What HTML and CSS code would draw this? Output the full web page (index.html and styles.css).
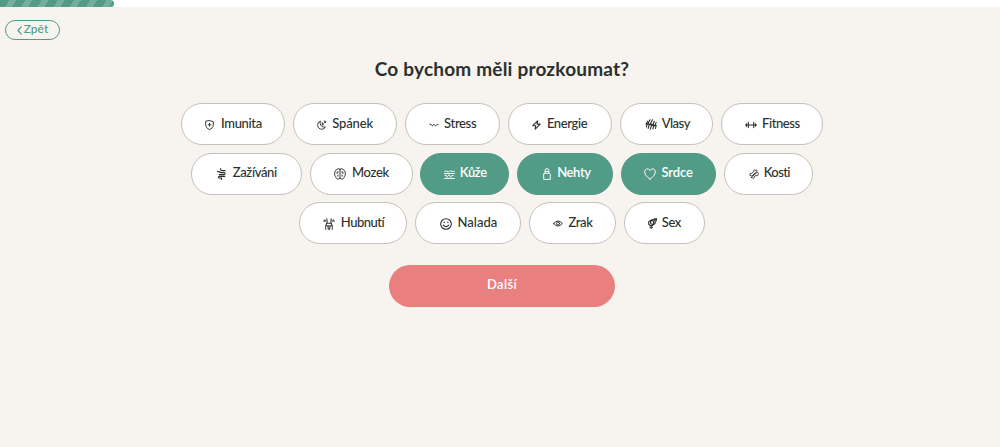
FILE: index.html
```html
<!DOCTYPE html>
<html lang="cs">
<head>
  <meta charset="UTF-8">
  <meta name="viewport" content="width=device-width, initial-scale=1">
  <title>Co bychom měli prozkoumat?</title>
  <link rel="stylesheet" href="styles.css">
</head>

<body>

  <div class="progress">
    <div class="progress-bar"></div>
  </div>

  <button class="back-btn">
    <svg width="5" height="9" viewBox="0 0 5 9"><path d="M4.2 .8L1 4.5L4.2 8.2"/></svg>
    <span>Zpět</span>
  </button>

  <main class="quiz">
    <h1>Co bychom měli prozkoumat?</h1>

    <div class="options">
      <div class="options-row">
        <button class="option imunita">
          <svg width="9" height="10" viewBox="0 0 9 10"><path d="M4.5 .6L8.3 1.6V4.8C8.3 7.1 6.6 8.8 4.5 9.5C2.4 8.8 .7 7.1 .7 4.8V1.6ZM4.5 3.4V6.2M3.1 4.8H5.9"/></svg>
          <span>Imunita</span>
        </button>
        <button class="option spanek">
          <svg width="9" height="10" viewBox="0 0 9 10"><path d="M3.1 1.4C1.2 2.2 .5 3.8 .7 5.6C1 7.9 2.7 9.2 4.8 9.2C6.5 9.2 7.8 8.3 8.4 6.9C5.5 7.8 2.4 5.5 3.1 1.4ZM4.9 3H6.3L5 4.9H6.5M7.2 1.2H8.5L7.4 2.6H8.6"/></svg>
          <span>Spánek</span>
        </button>
        <button class="option stress">
          <svg width="10" height="4" viewBox="0 0 10 4"><path d="M.5 1.8C1.2 .8 2 .8 2.5 1.8C3 3.2 3.8 3.2 4.2 2C4.7 1 5.3 1 5.8 2C6.3 3.2 7 3.2 7.5 2C8 1.1 8.8 1.1 9.5 1.8"/></svg>
          <span>Stress</span>
        </button>
        <button class="option energie">
          <svg class="bold" width="9" height="10" viewBox="0 0 9 10"><path d="M5.7 .8L.8 5.7H3.7L3.2 9.2L8.2 4.1H5.1Z"/></svg>
          <span>Energie</span>
        </button>
        <button class="option vlasy">
          <svg class="bold" width="12" height="11" viewBox="0 0 12 11"><path d="M2.6 2.2L1 5.2L2.2 5L1.5 8M5 .8L2.6 5.3L4.4 5L3.2 9.4M7.4 .8L5 5.8L6.8 5.4L5.4 10.2M9.4 2.2L7.4 6.4L9 6L7.9 9.8M11.2 3.4L9.8 6.8L11.2 6.4L10.5 9.4"/></svg>
          <span>Vlasy</span>
        </button>
        <button class="option fitness">
          <svg class="bold" width="12" height="8" viewBox="0 0 12 8"><path d="M3.3 1.4V6.6M8.7 1.4V6.6M1.5 2.8V5.2M10.5 2.8V5.2M.5 4H11.5"/></svg>
          <span>Fitness</span>
        </button>
      </div>

      <div class="options-row">
        <button class="option zazivani">
          <svg class="bold" width="9" height="12" viewBox="0 0 9 12"><path d="M3.7 .6V1.7Q3.7 2.6 5 2.6H8.2M.6 3.6H2.2Q3 4.6 4.4 4.6H7.4Q9 5.6 7.4 6.6H2.2M7.8 8.4H2.2Q.6 9.2 2 10H4.6V11.5"/></svg>
          <span>Zažíváni</span>
        </button>
        <button class="option mozek">
          <svg width="12" height="12" viewBox="0 0 12 12"><path d="M6 1.4C4.7 .1 3 .6 2.7 2C1 2.1 .4 3.7 1 5C.2 6.3 .5 7.8 1.7 8.4C1.6 10.2 3.3 11.4 4.7 10.9L6 10.2L7.3 10.9C8.7 11.4 10.4 10.2 10.3 8.4C11.5 7.8 11.8 6.3 11 5C11.6 3.7 11 2.1 9.3 2C9 .6 7.3 .1 6 1.4ZM6 1.4V10.2M3.9 3.6V5H2.6M3.9 8.2V7M8.1 3.6V5H9.4M8.1 8.2V7"/></svg>
          <span>Mozek</span>
        </button>
        <button class="option selected kuze">
          <svg width="11" height="9" viewBox="0 0 11 9"><path d="M.5 1.3Q1.7 .3 3 1.3T5.5 1.3T8 1.3T10.5 1.3M.5 3.5H10.5M.5 8.4H10.5M1 5.4H2.4M4.3 5.4H5.7M7.8 5.4H9.3M2.5 6.8H3.7M6 6.8H7.3"/></svg>
          <span>Kůže</span>
        </button>
        <button class="option selected nehty">
          <svg width="8" height="12" viewBox="0 0 8 12"><path d="M2.1 5.2V2.5Q2.1 .6 4 .6T5.9 2.5V5.2M1.4 5.2H6.6L7.3 6.4V11.4H.7V6.4ZM2.3 3.4H5.7"/></svg>
          <span>Nehty</span>
        </button>
        <button class="option selected srdce">
          <svg width="12" height="12" viewBox="0 0 12 12"><path d="M6 11.2C3.3 9 .7 6.9 .7 3.9C.7 2.1 1.8 .9 3.4 .9C4.6 .9 5.5 1.5 6 2.5C6.5 1.5 7.4 .9 8.6 .9C10.2 .9 11.3 2.1 11.3 3.9C11.3 6.9 8.7 9 6 11.2Z"/></svg>
          <span>Srdce</span>
        </button>
        <button class="option kosti">
          <svg width="10" height="10" viewBox="0 0 10 10"><path d="M1.2 6.3C0 4.9 1.5 3.7 2.7 4.4L4.7 2.6C4.1 1.3 5.4 .4 6.3 1.4C7.6 .2 8.7 1.8 7.7 2.7L3.2 6.8C2.4 7.3 1.6 7 1.2 6.3ZM2.4 8.5L3.3 7.5L7.6 3.8C9 3.1 10.1 4.6 9 5.3C9.4 6.7 7.9 7.2 7.1 6.3L5 8.1C5.2 9.4 3.7 9.9 2.4 8.5Z"/></svg>
          <span>Kosti</span>
        </button>
      </div>

      <div class="options-row">
        <button class="option hubnuti">
          <svg class="bold" width="12" height="12" viewBox="0 0 12 12"><path d="M3.8 .8Q4.7 4 3.3 6.2Q2.2 8.2 2.8 11.3M8.2 .8Q7.3 4 8.7 6.2Q9.8 8.2 9.2 11.3M.6 3H2.6L1.7 2M11.4 3H9.4L10.3 2M4 5.2H8M3 7.6Q6 8.6 9 7.6M5 9L5.4 11.3M7 9L6.6 11.3"/></svg>
          <span>Hubnutí</span>
        </button>
        <button class="option nalada">
          <svg class="bold" width="12" height="12" viewBox="0 0 12 12"><circle cx="6" cy="6" r="5.3"/><path d="M3.3 7.1Q6 10.1 8.7 7.1M4.1 4V4.6M7.9 4V4.6"/></svg>
          <span>Nalada</span>
        </button>
        <button class="option zrak">
          <svg width="10" height="7" viewBox="0 0 10 7"><path d="M.6 3.5Q5 -1.7 9.4 3.5Q5 8.7 .6 3.5Z"/><circle cx="5" cy="3.5" r="1.5"/></svg>
          <span>Zrak</span>
        </button>
        <button class="option sex">
          <svg class="bold" width="9" height="11" viewBox="0 0 9 11"><circle cx="3.2" cy="5.1" r="2.6"/><circle cx="4.9" cy="4" r="2.4"/><path d="M6.5 2.4L8.4 .7M6.4 .7H8.4V2.7M3.2 7.7V10.6M1.9 9.2H4.5"/></svg>
          <span>Sex</span>
        </button>
      </div>
    </div>

    <button class="next-btn">Další</button>
  </main>

</body>
</html>
```
FILE: styles.css
```css
:root {
  --green: #529b86;
  --pink: #ea7f7f;
  --bg-color: #f7f3ee;
  --font-color: #2b302d;
  --border-color: #c5c1bc;
}

* { margin: 0; padding: 0; box-sizing: border-box; }

body {
  font-family: 'Lato', sans-serif;
  background-color: var(--bg-color);
  color: var(--font-color);
}

button {
  font-family: inherit;
  color: inherit;
  cursor: pointer;
}

svg {
  flex: none;
  fill: none;
  stroke: currentColor;
  stroke-width: 0.95;
  stroke-linecap: round;
  stroke-linejoin: round;
}

svg.bold {
  stroke-width: 1.1;
}

.progress {
  height: 7px;
  background: white;
}

.progress-bar {
  width: 114px;
  height: 7px;
  border-radius: 0 4px 4px 0;
  background: repeating-linear-gradient(120deg, #529b86 0 8px, #74ae9d 8px 14px);
}

.back-btn {
  display: flex;
  align-items: center;
  justify-content: center;
  gap: 2px;
  width: 55px;
  height: 20px;
  margin: 13px 0 0 5px;
  padding-bottom: 3px;
  border: 1px solid var(--green);
  border-radius: 10px;
  background: none;
  color: var(--green);
  font-size: 12px;
  font-weight: 500;
}

.back-btn svg {
  margin-top: 3px;
  stroke-width: 1.2;
}

.quiz {
  display: flex;
  flex-direction: column;
  align-items: center;
  padding-left: 4px;
}

.quiz h1 {
  margin-top: 17px;
  font-size: 19px;
  line-height: 24px;
  font-weight: 700;
  letter-spacing: 0.2px;
  white-space: nowrap;
}

.options {
  display: flex;
  flex-direction: column;
  gap: 7.7px;
  margin-top: 22px;
}

.options-row {
  display: flex;
  justify-content: center;
  gap: 7.8px;
}

.option {
  display: flex;
  align-items: center;
  gap: 6px;
  height: 42px;
  padding: 0 0 0 23.5px;
  border: 1px solid var(--border-color);
  border-radius: 21px;
  background: white;
  font-size: 13px;
  font-weight: 500;
  letter-spacing: -0.35px;
  white-space: nowrap;
}

.option svg {
  margin-top: 1px;
}

.option span {
  margin-top: -3px;
}

.option.selected {
  background: var(--green);
  border-color: var(--green);
  color: white;
  font-weight: 600;
}

.imunita { width: 104.5px; gap: 7px; }
.spanek { width: 104px; letter-spacing: -0.15px; }
.stress { width: 95.5px; gap: 5px; }
.energie { width: 104.5px; gap: 5.5px; }
.vlasy { width: 93px; gap: 5px; letter-spacing: -0.5px; }
.fitness { width: 102.5px; gap: 4.5px; letter-spacing: -0.4px; }
.zazivani { width: 111px; padding-left: 25px; gap: 7px; }
.mozek { width: 103px; }
.kuze { width: 89px; padding-left: 22.5px; gap: 5px; }
.nehty { width: 96px; padding-left: 25px; }
.srdce { width: 95.5px; padding-left: 22.5px; gap: 5px; letter-spacing: -0.1px; }
.kosti { width: 89px; gap: 5px; letter-spacing: -0.6px; }
.hubnuti { width: 108.5px; gap: 5.5px; letter-spacing: -0.5px; }
.nalada { width: 106px; letter-spacing: 0; }
.zrak { width: 87.5px; gap: 5px; }
.sex { width: 81px; padding-left: 22.5px; gap: 5px; }

.next-btn {
  width: 226px;
  height: 42px;
  margin-top: 20.4px;
  padding-bottom: 3px;
  border: none;
  border-radius: 21px;
  background: var(--pink);
  color: white;
  font-size: 13px;
  font-weight: 600;
  letter-spacing: 0.3px;
}
```
